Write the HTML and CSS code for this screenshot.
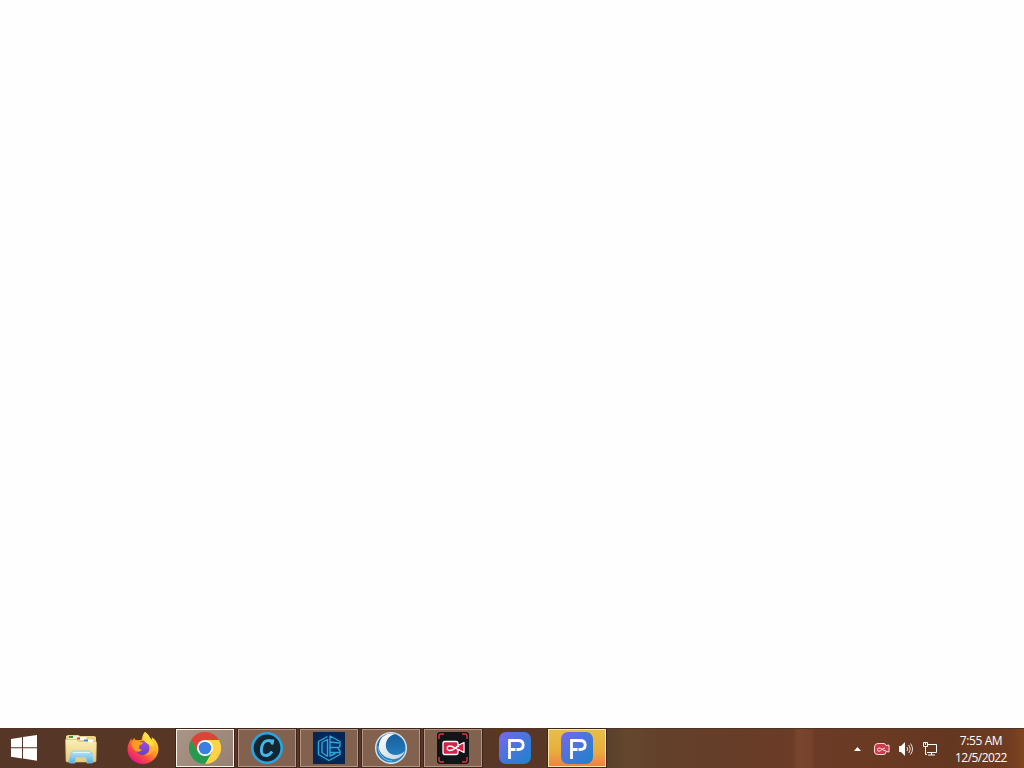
FILE: index.html
```html
<!DOCTYPE html>
<html lang="en">
<head>
    <meta charset="UTF-8">
    <meta name="viewport" content="width=device-width, initial-scale=1.0">
    <title>Desktop</title>
    <link rel="stylesheet" href="styles.css">
</head>
<body>
    <main class="desktop"></main>
    <footer class="taskbar">
        <div class="start">
            <svg width="26" height="26" viewBox="0 0 26 26" fill="#fff">
                <path d="M0 4 11 2.300V12.300H0zM12 2.100 26 0V12.300H12zM0 13.300H11V23.400L0 21.800zM12 13.300H26V25.800L12 23.600z"/>
            </svg>
        </div>
        <div class="apps">
            <!-- File Explorer -->
            <div class="app">
                <svg class="icon" viewBox="0 0 32 32">
                    <defs>
                        <linearGradient id="folder" x2="0" y2="1"><stop stop-color="#fbf0b8"/><stop offset="1" stop-color="#e5cb78"/></linearGradient>
                        <linearGradient id="stand" x2="0" y2="1"><stop stop-color="#bce6f8"/><stop offset="1" stop-color="#58aee0"/></linearGradient>
                    </defs>
                    <path fill="#ead58c" d="M1 6V4l2-1h10l2 1h14l2 1v8H1z"/>
                    <path fill="#fff6d0" d="M4 4h10v3H4z"/>
                    <path fill="#3c9652" d="M4 4h4v2H4z"/>
                    <path fill="#fff" d="M12 5h9v3h-9z"/>
                    <path fill="#c94334" d="M12 5.500h3v2h-3z"/>
                    <path fill="url(#folder)" stroke="#d7bd70" stroke-width=".6" d="M.5 7.500H11l3 2h17l.5 1-.5 18.500q0 1-2 1H3q-2 0-2-1z"/>
                    <path fill="#fff" d="M19 7.500h9v2.500h-9z"/>
                    <path fill="#3f86c6" d="M19 7.500h4v2h-4z"/>
                    <path fill="url(#stand)" stroke="#8bcbed" stroke-width=".7" d="m6 21 2-2h16l3 2 1.500 9-1.500 1h-5l-1-6H11l-1 6H5l-1.500-1z"/>
                    <path stroke="#dff6ff" fill="none" d="M8 20.500h17"/>
                </svg>
            </div>
            <!-- Firefox -->
            <div class="app">
                <svg class="icon" viewBox="0 0 32 32">
                    <defs>
                        <linearGradient id="fox" x1=".8" y1=".1" x2=".2" y2=".9"><stop stop-color="#ffe23b"/><stop offset=".4" stop-color="#ff9924"/><stop offset=".7" stop-color="#ff4b3e"/><stop offset="1" stop-color="#e51b83"/></linearGradient>
                        <linearGradient id="globe" x2="0" y2="1"><stop stop-color="#a34bdd"/><stop offset="1" stop-color="#6344be"/></linearGradient>
                    </defs>
                    <path fill="url(#fox)" d="M18 0c3 2 4 4 5 6l2 2c0-1 0-2-.5-3 5 3 7 8 7 12 0 8-7 15-15.500 15S.5 25.500.5 17c0-4 2-8 4-11v3l3-3 1 3c2-1 4-1 6-1C15 5 16 2 18 0z"/>
                    <circle cx="15.500" cy="16" r="7.200" fill="url(#globe)"/>
                    <path fill="#ff9a28" d="M5 10c3-3 6-2 8 0l3 .5c0 2-3 2-4 4-.5 2 1 3.500 3 3-2 3-6 3-8 0-2-2-3-5-2-7.500z"/>
                    <path fill="#ffdf3c" d="M18 0c3 2 4 4 5 6 4 4 5 8 4 13-1-4-3-6-6-7-3-2-4-3-5-5 0-3 0-5 2-7z"/>
                    <path fill="#ffb52e" d="M21 12c3 5 1 10-4 11 7 2 12-5 10-12-1 2-2 4-3 4-1-2-2-2-3-3z" opacity=".65"/>
                </svg>
            </div>
            <!-- Chrome -->
            <div class="app open front">
                <svg class="icon" viewBox="0 0 32 32">
                    <path fill="#dc4437" d="M2.140 8A16 16 0 0 1 29.860 8L16 8 9.070 20z"/>
                    <path fill="#ffd345" d="M29.860 8A16 16 0 0 1 16 32L22.930 20 16 8z"/>
                    <path fill="#259b50" d="M16 32A16 16 0 0 1 2.140 8L9.070 20 22.930 20z"/>
                    <circle cx="16" cy="16" r="8" fill="#fff"/>
                    <circle cx="16" cy="16" r="6.300" fill="#397ee5"/>
                </svg>
            </div>
            <!-- C app -->
            <div class="app open">
                <svg class="icon" viewBox="0 0 32 32">
                    <circle cx="16" cy="16" r="14.700" fill="#142630" stroke="#27a5e5" stroke-width="2.600"/>
                    <path fill="none" stroke="#43b9ee" stroke-width="2.800" d="M21 12.500 22 7.500M21.500 11.500C20 7 13 7.500 11 14c-2 7 .5 9.500 4 9.500 3 0 4.500-1.500 6-4"/>
                </svg>
            </div>
            <!-- Hexagon app -->
            <div class="app open">
                <svg class="icon" viewBox="0 0 32 32">
                    <defs><radialGradient id="navy"><stop stop-color="#073f7e"/><stop offset="1" stop-color="#042652"/></radialGradient></defs>
                    <path fill="url(#navy)" d="M0 0h32v32H0z"/>
                    <path fill="none" stroke="#2fa5d8" stroke-width="1.400" stroke-linejoin="round" d="M14.500 24.500V7.500L9 10.500v10l5.500 4M14.500 4.500 5.500 9.500v13l10.500 6 11-6V19l-2-2.500 2-2.500V9.500L17 4v20l5.500-2.500M17 15.500h8M17 10l9 1M17 20.500h9.500"/>
                </svg>
            </div>
            <!-- Crescent app -->
            <div class="app open">
                <svg class="icon" viewBox="0 0 32 32">
                    <defs>
                        <linearGradient id="silver" x2="1" y2="1"><stop stop-color="#fff"/><stop offset="1" stop-color="#c1d3df"/></linearGradient>
                        <linearGradient id="blue" x2="0" y2="1"><stop stop-color="#175d9c"/><stop offset="1" stop-color="#2788c8"/></linearGradient>
                    </defs>
                    <circle cx="16" cy="16" r="15.300" fill="url(#blue)" stroke="#d6e0e6" stroke-width="1.500"/>
                    <path fill="url(#silver)" d="M20 2C12 4 9 12 12 18c3 6 12 7 18 1-3 7-10 10-17 7C5 23 2 16 5 9 7 4 13 0 20 2z"/>
                    <path fill="none" stroke="#8bbbd9" d="M3 14c0 8 6 15 14 15"/>
                </svg>
            </div>
            <!-- Screen recorder -->
            <div class="app open">
                <svg class="icon" viewBox="0 0 32 32">
                    <rect width="32" height="32" rx="3" fill="#111518"/>
                    <path fill="none" stroke="#db3544" stroke-width="1.400" d="M2 7V4q0-2 2-2h3M25 2h3q2 0 2 2v3M2 25v3q0 2 2 2h3M25 30h3q2 0 2-2v-3"/>
                    <path fill="#d92146" stroke="#fff" stroke-width="1.300" stroke-linejoin="round" d="M8 9.500h11q2 0 2 2v2l6-3v10l-6-3v3q0 2-2 2H8q-2 0-2-2v-9q0-2 2-2z"/>
                    <path fill="none" stroke="#fff" stroke-width="1.400" d="M23 18c-4 0-6-4-10-4a2.300 2.300 0 1 0 0 4.500c4 0 5-3.500 9-4.500"/>
                </svg>
            </div>
            <!-- P app -->
            <div class="app">
                <svg class="icon" viewBox="0 0 32 32">
                    <defs><linearGradient id="purple" x2="1" y2="1"><stop stop-color="#7767ed"/><stop offset="1" stop-color="#1983ca"/></linearGradient></defs>
                    <rect width="32" height="32" rx="7" fill="url(#purple)"/>
                    <path fill="none" stroke="#fff" stroke-width="2.800" d="M10.500 27V8.500H19q5.200 0 5.200 4.500T19 17.500h-1.500M12 17.500h4.500"/>
                </svg>
            </div>
            <div class="app open alert">
                <svg class="icon" viewBox="0 0 32 32">
                    <rect width="32" height="32" rx="7" fill="url(#purple)"/>
                    <path fill="none" stroke="#fff" stroke-width="2.800" d="M10.500 27V8.500H19q5.200 0 5.200 4.500T19 17.500h-1.500M12 17.500h4.500"/>
                </svg>
            </div>
        </div>
        <div class="tray">
            <svg class="arrow" width="7" height="4" viewBox="0 0 7 4"><path fill="#fff" d="M0 4 3.500 0 7 4z"/></svg>
            <svg width="16" height="16" viewBox="0 0 16 16">
                <path fill="#c83c4b" stroke="#ffd9d5" d="M4 2.500h6q1.500 0 2 2l3-.5v7l-3-.5q0 3-2 3H4Q.5 13.500.5 11V6q0-3.500 3.500-3.500z"/>
                <path fill="none" stroke="#ffe1df" d="M12 10C9 9.500 7 7 5 7a1.600 1.600 0 1 0 0 3.200c2 0 3-2.700 6-3.200"/>
            </svg>
            <svg width="16" height="16" viewBox="0 0 16 16">
                <path fill="#fff" d="M1 5h2l4-4v14l-4-4H1z"/>
                <path fill="none" stroke="#fff" d="M9 6q1.500 2 0 4M10.800 4q3 4 0 8M12.500 2.500q4 5.500 0 11" opacity=".85"/>
            </svg>
            <svg width="16" height="16" viewBox="0 0 16 16" fill="none" stroke="#fff">
                <path d="M6 3.500h8.500v8H5M9.500 12v2M6 14h7M1.500 1.500h4v4h-4zM3.500 5.500v8h1.500M3.500 1v3"/>
            </svg>
        </div>
        <div class="clock">
            <span class="time">7:55 AM</span>
            <span class="date">12/5/2022</span>
        </div>
    </footer>
</body>
</html>
```
FILE: styles.css
```css
body {
    margin: 0;
    height: 100vh;
    display: flex;
    flex-direction: column;
    overflow: hidden;
    background-color: #fff;
    font-family: "Open Sans", "Noto Sans", sans-serif;
}

.desktop {
    flex: 1;
    background-color: #fefefe;
}

.taskbar {
    height: 40px;
    display: flex;
    align-items: stretch;
    box-shadow: inset 0 1px #503527;
    background: linear-gradient(90deg, #563626 0, #593727 540px, #58402b 606px, #65472e 628px, #63402a 660px, #673d28 740px, #6b3c27 792px, #78452f 798px, #77422c 811px, #6b3b27 815px, #6b3a23 870px, #643720 950px, #713c20 1010px, #804520 1024px);
}

.start {
    width: 41px;
    height: 39px;
    padding-left: 11px;
    display: flex;
    align-items: center;
}

.apps {
    display: flex;
    gap: 4px;
}

.app {
    width: 58px;
    height: 40px;
    box-sizing: border-box;
    display: flex;
    justify-content: center;
    align-items: center;
}

.icon {
    width: 32px;
    height: 32px;
}

.open {
    height: 38px;
    margin: 1px 0;
    background-color: #83614f;
    border: 1px solid #b39684;
    outline: 1px solid #3e251b;
}

.front {
    background: linear-gradient(135deg, #a99588, #978072);
    border-color: #fff4e6;
}

.alert {
    background: linear-gradient(#e5bf49, #e9ad3d 60%, #ef8143);
    border-color: #ffe6a2;
}

.tray {
    margin-left: auto;
    display: flex;
    align-items: center;
    gap: 8px;
    padding-top: 1px;
}

.arrow {
    margin-right: 5px;
}

.clock {
    width: 86px;
    display: flex;
    flex-direction: column;
    align-items: center;
    padding-top: 4px;
    color: #fff;
    font-size: 12px;
    line-height: 17px;
    white-space: nowrap;
}

.time {
    letter-spacing: -0.4px;
}

.date {
    letter-spacing: -0.55px;
}
```
